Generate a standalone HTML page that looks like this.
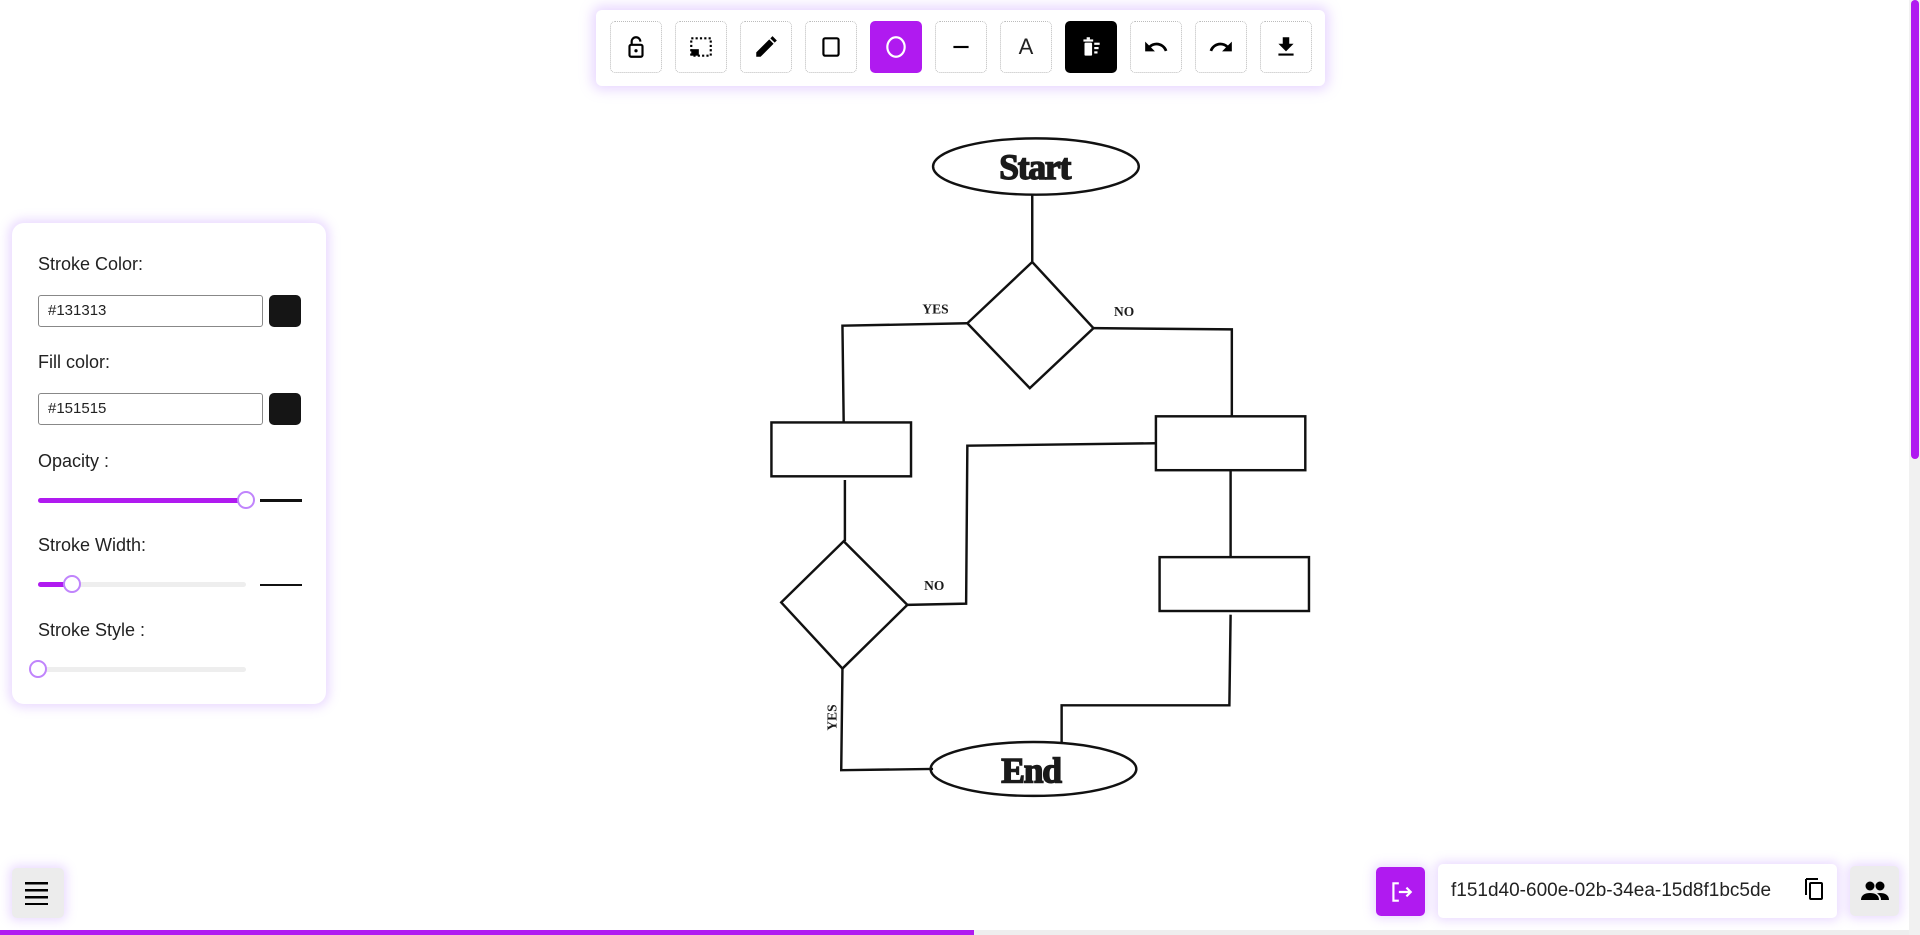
<!DOCTYPE html>
<html><head><meta charset="utf-8"><style>
*{box-sizing:border-box;margin:0;padding:0}
body{width:1920px;height:935px;overflow:hidden;background:#fff;font-family:"Segoe UI","Liberation Sans",sans-serif;position:relative;color:#222}
.tb{position:absolute;left:596px;top:10px;width:729px;height:76px;background:#fff;border-radius:6px;box-shadow:0 0 12px 4px rgba(190,140,255,.35)}
.bt{position:absolute;top:11px;width:52px;height:52px;border:1px dotted #bbb;border-radius:5px;display:flex;align-items:center;justify-content:center}
.bt svg{width:26px;height:26px}
.panel{position:absolute;left:12px;top:223px;width:314px;height:481px;background:#fff;border-radius:12px;box-shadow:0 0 10px 4px rgba(190,140,255,.3)}
.lbl{position:absolute;left:26px;font-size:18px;color:#222}
.inp{position:absolute;left:26px;width:225px;height:32px;border:1px solid #888;border-radius:3px;font-family:"Liberation Sans",sans-serif;font-size:15px;padding:6px 9px;color:#222}
.sw{position:absolute;left:257px;width:32px;height:32px;background:#151515;border-radius:5px}
.track{position:absolute;left:26px;width:208px;height:5px;background:#eee;border-radius:3px}
.fill{position:absolute;left:0;top:0;height:5px;background:#b01af0;border-radius:3px}
.thumb{position:absolute;width:18px;height:18px;border:2px solid #c084fc;background:#fff;border-radius:50%;top:-7px}
.hl{position:absolute;left:248px;width:42px;background:#111}
.sq{position:absolute;border-radius:5px;display:flex;align-items:center;justify-content:center;box-shadow:0 0 10px 3px rgba(190,140,255,.3)}
</style></head><body>

<svg style="position:absolute;left:0;top:0" width="1920" height="935" viewBox="0 0 1568 763.6">
<g fill="none" stroke="#111" stroke-width="2">
<ellipse cx="846" cy="136" rx="84" ry="23"/>
<ellipse cx="844" cy="628" rx="84" ry="22"/>
<path d="M843 159L843 214"/>
<path d="M843 214L790 264L841 317L893 268Z"/>
<path d="M790 264L688 266L689 345"/>
<path d="M893 268L1006 269L1006 340"/>
<rect x="630" y="345" width="114" height="44"/>
<rect x="944" y="340" width="122" height="44"/>
<path d="M690 392L690 442"/>
<path d="M689 442L638 492L688 546L741 494Z"/>
<path d="M741 494L789 493L790 364L944 362"/>
<path d="M1005 384L1005 455"/>
<rect x="947" y="455" width="122" height="44"/>
<path d="M1005 502L1004 576L867 576L867 606"/>
<path d="M688 546L687 629L762 628"/>
</g>
<g font-family="Liberation Serif,serif" font-weight="bold" fill="#1a1a1a" text-anchor="middle">
<text x="845" y="146" font-size="29" stroke="#1a1a1a" stroke-width="1.2" letter-spacing="-1">Start</text>
<text x="842" y="639" font-size="29" stroke="#1a1a1a" stroke-width="1.2" letter-spacing="-1">End</text>
<text x="764" y="256" font-size="11">YES</text>
<text x="918" y="258" font-size="11">NO</text>
<text x="763" y="482" font-size="11">NO</text>
<text x="0" y="0" font-size="11" transform="translate(683,586) rotate(-90)">YES</text>
</g>
</svg>

<div class="tb">
<div class="bt" style="left:14px"><svg viewBox="0 0 24 24"><path d="M8 10V7a4 4 0 0 1 8 0" fill="none" stroke="#000" stroke-width="2"/><rect x="6" y="10" width="12" height="11" rx="1.5" fill="none" stroke="#000" stroke-width="2"/><circle cx="12" cy="15.5" r="1.5"/></svg></div>
<div class="bt" style="left:79px"><svg viewBox="0 0 24 24"><rect x="3" y="4" width="18" height="16" fill="none" stroke="#000" stroke-width="2" stroke-dasharray="2 2"/><rect x="3" y="14" width="7" height="6"/></svg></div>
<div class="bt" style="left:144px"><svg viewBox="0 0 24 24"><path d="M3 21v-4L15 5l4 4L7 21z M16 4l2-2 4 4-2 2z"/></svg></div>
<div class="bt" style="left:209px"><svg viewBox="0 0 24 24"><rect x="5" y="4" width="14" height="16" rx="1.5" fill="none" stroke="#000" stroke-width="2"/></svg></div>
<div class="bt" style="left:274px;background:#b01af0;border:none"><svg viewBox="0 0 24 24"><ellipse cx="12" cy="12" rx="8" ry="9" fill="none" stroke="#fff" stroke-width="2"/></svg></div>
<div class="bt" style="left:339px"><svg viewBox="0 0 24 24"><rect x="5" y="11" width="14" height="2"/></svg></div>
<div class="bt" style="left:404px;font-size:22px;font-family:'Liberation Sans',sans-serif">A</div>
<div class="bt" style="left:469px;background:#000;border:none"><svg viewBox="0 0 24 24" fill="#fff"><rect x="5" y="5" width="9" height="2"/><rect x="8" y="3" width="3" height="2"/><rect x="6" y="8" width="7" height="12" rx="1"/><rect x="15" y="8" width="5" height="2"/><rect x="15" y="12" width="4" height="2"/><rect x="15" y="16" width="3" height="2"/></svg></div>
<div class="bt" style="left:534px"><svg viewBox="0 0 24 24"><path d="M12.5 8c-2.6 0-5 1-6.9 2.6L2 7v9h9l-3.6-3.6c1.4-1.2 3.2-1.9 5.1-1.9 3.5 0 6.5 2.3 7.6 5.5l2.4-.8C21.1 11 17.1 8 12.5 8z"/></svg></div>
<div class="bt" style="left:599px"><svg viewBox="0 0 24 24"><path d="M11.5 8c2.6 0 5 1 6.9 2.6L22 7v9h-9l3.6-3.6c-1.4-1.2-3.2-1.9-5.1-1.9-3.5 0-6.5 2.3-7.6 5.5l-2.4-.8C2.9 11 6.9 8 11.5 8z"/></svg></div>
<div class="bt" style="left:664px"><svg viewBox="0 0 24 24"><path d="M19 9h-4V3H9v6H5l7 7 7-7zM5 18v2h14v-2H5z"/></svg></div>
</div>

<div class="panel">
<div class="lbl" style="top:31px">Stroke Color:</div>
<div class="inp" style="top:72px">#131313</div><div class="sw" style="top:72px"></div>
<div class="lbl" style="top:129px">Fill color:</div>
<div class="inp" style="top:170px">#151515</div><div class="sw" style="top:170px"></div>
<div class="lbl" style="top:228px">Opacity :</div>
<div class="track" style="top:275px"><div class="fill" style="width:208px"></div><div class="thumb" style="left:199px"></div></div>
<div class="hl" style="top:276px;height:3px"></div>
<div class="lbl" style="top:312px">Stroke Width:</div>
<div class="track" style="top:359px"><div class="fill" style="width:30px"></div><div class="thumb" style="left:25px"></div></div>
<div class="hl" style="top:361px;height:2px"></div>
<div class="lbl" style="top:397px">Stroke Style :</div>
<div class="track" style="top:444px"><div class="thumb" style="left:-9px"></div></div>
</div>

<div class="sq" style="left:12px;top:868px;width:52px;height:50px;background:#ececec"><svg width="26" height="24" viewBox="0 0 26 24"><rect y="1" width="23" height="2.5"/><rect y="8" width="23" height="2.5"/><rect y="15" width="23" height="2.5"/><rect y="22" width="23" height="2.5"/></svg></div>
<div class="sq" style="left:1376px;top:867px;width:49px;height:49px;background:#b01af0"><svg width="26" height="26" viewBox="0 0 24 24" fill="none" stroke="#fff" stroke-width="2"><path d="M10 4H5v16h5M10 12h11M17 8l4 4-4 4"/></svg></div>
<div class="sq" style="left:1438px;top:864px;width:399px;height:54px;background:#fff;justify-content:flex-start;padding-left:13px;font-size:19px;color:#222">f151d40-600e-02b-34ea-15d8f1bc5de
<svg style="position:absolute;right:12px;top:13px" width="22" height="24" viewBox="0 0 22 24" fill="none" stroke="#000" stroke-width="2"><path d="M3 2v16"/><path d="M3 2h12"/><rect x="7" y="6" width="12" height="16" rx="1"/></svg></div>
<div class="sq" style="left:1850px;top:866px;width:49px;height:50px;background:#ececec"><svg width="30" height="22" viewBox="0 0 30 22"><circle cx="10" cy="6" r="4.5"/><circle cx="20" cy="6" r="4.5"/><path d="M1 20c0-5 4-7 9-7s9 2 9 7z"/><path d="M17 13.5c1-.3 2-.5 3-.5 5 0 9 2 9 7h-8c0-3-1.5-5-4-6.5z"/></svg></div>

<div style="position:absolute;left:0;top:930px;width:1920px;height:5px;background:#eee"></div>
<div style="position:absolute;left:0;top:930px;width:974px;height:5px;background:#b01af0"></div>
<div style="position:absolute;left:1909px;top:0;width:11px;height:935px;background:#f1f1f1"></div>
<div style="position:absolute;left:1911px;top:0;width:8px;height:459px;background:#b01af0;border-radius:4px"></div>
</body></html>
